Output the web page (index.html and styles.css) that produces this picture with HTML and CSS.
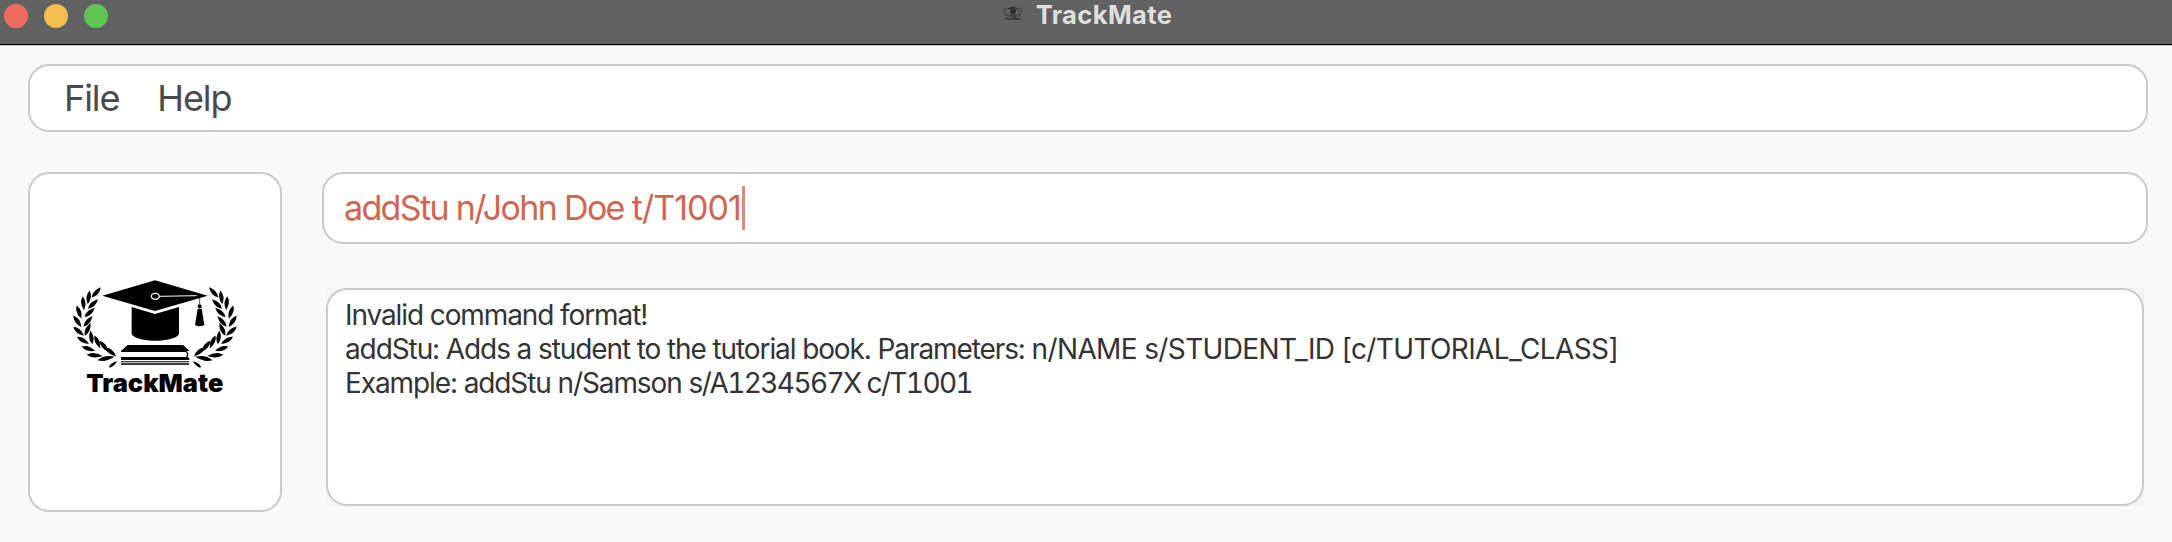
FILE: index.html
```html
<!DOCTYPE html>
<html lang="en">
<head>
<meta charset="utf-8">
<title>TrackMate</title>
<link rel="stylesheet" href="styles.css">
</head>
<body>
<svg class="defs" aria-hidden="true">
  <defs>
    <path id="leaf" d="M-21 0Q-3-13 21 0Q-3 13-21 0Z"/>
    <g id="branch">
      <use href="#leaf" transform="translate(109 82) rotate(-48)"/>
      <use href="#leaf" transform="translate(86 97) rotate(98)"/>
      <use href="#leaf" transform="translate(99 117) rotate(-43)"/>
      <use href="#leaf" transform="translate(70 115) rotate(85)"/>
      <use href="#leaf" transform="translate(89 142) rotate(-42)"/>
      <use href="#leaf" transform="translate(57 141) rotate(70)"/>
      <use href="#leaf" transform="translate(84 169) rotate(-50)"/>
      <use href="#leaf" transform="translate(52 169) rotate(55)"/>
      <use href="#leaf" transform="translate(83 193) rotate(-65)"/>
      <use href="#leaf" transform="translate(56 199) rotate(40)"/>
      <use href="#leaf" transform="translate(94 217) rotate(-97)"/>
      <use href="#leaf" transform="translate(69 226) rotate(31)"/>
      <use href="#leaf" transform="translate(112 231) rotate(66)"/>
      <use href="#leaf" transform="translate(85 251) rotate(17)"/>
      <use href="#leaf" transform="translate(132 244) rotate(52)"/>
      <use href="#leaf" transform="translate(104 271) rotate(5) scale(1.15 1)"/>
      <use href="#leaf" transform="translate(152 260) rotate(40)"/>
      <use href="#leaf" transform="translate(138 280) rotate(-12) scale(1.25 1)"/>
      <path d="M147 305Q154 293 171 289Q165 302 150 308Z"/>
    </g>
    <symbol id="logo" viewBox="0 0 570 420">
      <use href="#branch"/>
      <use href="#branch" transform="translate(570) scale(-1 1)"/>
      <path d="M127 92L285 46L443 92L285 138Z"/>
      <path d="M215 126L285 147L357 126V207C345 234 227 234 215 207Z"/>
      <path class="cord" d="M299 94L410 92"/>
      <ellipse class="button" cx="286" cy="94" rx="12" ry="9"/>
      <path class="tassel-cord" d="M419 97V125"/>
      <circle cx="419" cy="124" r="6"/>
      <path d="M413 131H425L433 180Q419 188 405 180Z"/>
      <path d="M203 240H369L389 258H183Z"/>
      <path class="pages" d="M183 259H378Q388 267 378 280"/>
      <path d="M183 276H381Q388 276 388 281V285H183Z"/>
      <path d="M183 289H387V292H183ZM183 295H387V299H183Z"/>
      <text class="wordmark" x="79" y="380" textLength="411" lengthAdjust="spacingAndGlyphs">TrackMate</text>
    </symbol>
  </defs>
</svg>
<div class="window">
  <header class="titlebar">
    <div class="lights"><i class="light close"></i><i class="light minimize"></i><i class="light maximize"></i></div>
    <div class="caption"><svg class="caption-icon"><use href="#logo"/></svg><span>TrackMate</span></div>
  </header>
  <main class="content">
    <nav class="panel menu"><span>File</span><span>Help</span></nav>
    <div class="workspace">
      <aside class="panel brand"><svg class="brand-logo"><use href="#logo"/></svg></aside>
      <section class="console">
        <div class="panel command"><span>addStu n/John Doe <span class="argument">t/T1001</span></span><i class="caret"></i></div>
        <div class="result-back">
          <div class="panel result">
            <p class="line">Invalid command format!</p>
            <p class="line">addStu: Adds a student to the tutorial book. Parameters: <span class="params">n/NAME s/STUDENT_ID [c/TUTORIAL_CLASS]</span></p>
            <p class="line">Example: addStu n/Samson <span class="sample">s/A1234567X c/T1001</span></p>
          </div>
        </div>
      </section>
    </div>
  </main>
</div>
</body>
</html>
```

FILE: styles.css
```css
* { box-sizing: border-box; }
body { margin: 0; font-family: Inter, "Liberation Sans", sans-serif; }
.defs { display: block; width: 0; height: 0; }
.window { height: 542px; background: #f9f9f9; overflow: hidden; }
.titlebar {
  display: grid; grid-template-columns: 1fr auto 1fr;
  height: 46px; background: #626262;
  border-bottom: 1px solid #c4c4c4;
  box-shadow: inset 0 -1px #000;
}
.lights { display: flex; gap: 16px; padding: 4px 0 0 4px; }
.light { width: 24px; height: 24px; border-radius: 50%; }
.close { background: #ed6b5f; }
.minimize { background: #f5bf4f; }
.maximize { background: #62c655; }
.caption {
  display: flex; gap: 12px; padding-left: 2px;
  color: #dfdfdf; font-size: 25.5px; font-weight: 700; line-height: 29px;
  letter-spacing: .4px; white-space: nowrap;
}
.caption-icon { width: 22px; height: 18px; margin-top: 4px; opacity: .6; }
.content { padding: 18px 24px 0 28px; }
.panel { background: #fff; border: 2px solid #cacaca; border-radius: 21px; }
.menu {
  display: flex; align-items: center; gap: 38px; height: 68px;
  padding: 0 0 0 34px; color: #4a4a4a;
  font-size: 36px; letter-spacing: -1.1px;
}
.workspace { display: flex; gap: 40px; margin-top: 40px; }
.brand { display: flex; justify-content: center; width: 254px; height: 340px; padding-top: 91px; }
.brand-logo { width: 190px; height: 140px; flex: none; }
.console { flex: 1; }
.command {
  display: flex; align-items: center; height: 72px; padding: 0 0 2px 20px;
  color: #d06651; font-size: 34px; letter-spacing: -1.65px; white-space: pre;
}
.argument { letter-spacing: -.95px; }
.caret { width: 3px; height: 44px; margin: 2px 0 0 1px; background: #d98c7c; }
.result-back { margin: 44px 4px 0; background: #f4f4f4; }
.result { height: 218px; padding: 8px 0 0 17px; color: #333; }
.line { margin: 0; font-size: 28px; line-height: 34px; white-space: pre; letter-spacing: -1.1px; }
.params { letter-spacing: -.63px; }
.sample { letter-spacing: -1.6px; font-variant-numeric: tabular-nums; }
.wordmark { font: 900 75px Inter, sans-serif; }
.cord { fill: none; stroke: #fff; stroke-width: 3; }
.button { fill: #000; stroke: #fff; stroke-width: 4; }
.tassel-cord { fill: none; stroke: #000; stroke-width: 2; }
.pages { fill: none; stroke: #000; stroke-width: 4; }
```
